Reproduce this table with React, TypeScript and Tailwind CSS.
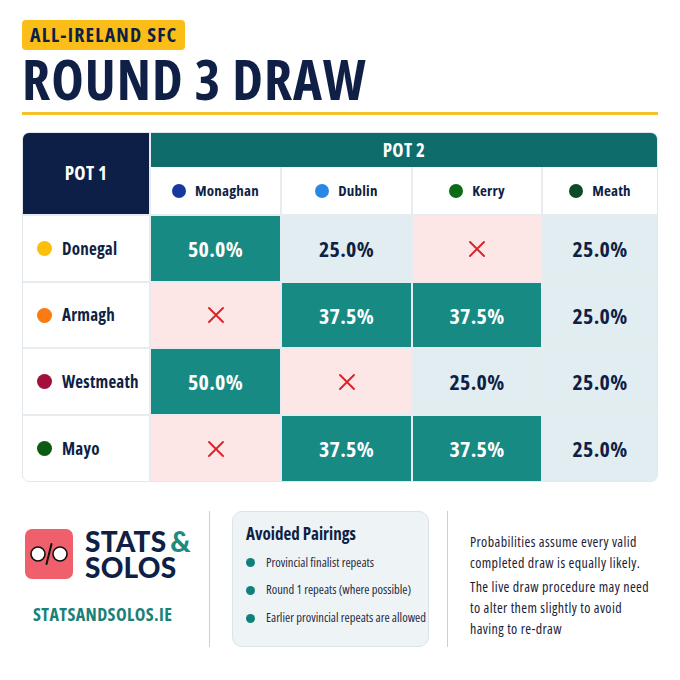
const C = "font-['Open_Sans',sans-serif] [font-stretch:condensed]";

const pot2 = [
  { name: "Monaghan", color: "#17399c" },
  { name: "Dublin", color: "#2b87e3" },
  { name: "Kerry", color: "#0b6b16" },
  { name: "Meath", color: "#0c4a2b" },
];

type Cell = "hi" | "lo" | "x";

const rows: { name: string; color: string; cells: [Cell, string][] }[] = [
  { name: "Donegal", color: "#fcbf0a", cells: [["hi", "50.0%"], ["lo", "25.0%"], ["x", ""], ["lo", "25.0%"]] },
  { name: "Armagh", color: "#fb7a12", cells: [["x", ""], ["hi", "37.5%"], ["hi", "37.5%"], ["lo", "25.0%"]] },
  { name: "Westmeath", color: "#a3103c", cells: [["hi", "50.0%"], ["x", ""], ["lo", "25.0%"], ["lo", "25.0%"]] },
  { name: "Mayo", color: "#0b5c12", cells: [["x", ""], ["hi", "37.5%"], ["hi", "37.5%"], ["lo", "25.0%"]] },
];

function Cross() {
  return (
    <svg width="18" height="18" viewBox="0 0 18 18">
      <path d="M2 2L16 16M16 2L2 16" stroke="#d8232a" strokeWidth="1.9" strokeLinecap="round" />
    </svg>
  );
}

function Logo() {
  return (
    <svg width="48" height="50" viewBox="0 0 48 50">
      <rect x="0" y="0" width="48" height="50" rx="7" fill="#ef5f6c" />
      <circle cx="13" cy="25" r="7" fill="#fff" stroke="#111" strokeWidth="1.6" />
      <circle cx="35" cy="25" r="7" fill="#fff" stroke="#111" strokeWidth="1.6" />
      <path d="M26.5 15L21.5 35" stroke="#111" strokeWidth="2" strokeLinecap="round" />
    </svg>
  );
}

export default function App() {
  return (
    <div className={`w-[680px] h-[680px] bg-white px-[22px] pt-[20px] text-[#0f1f45] ${C}`}>
      {/* Header */}
      <div className="inline-flex h-[30px] items-center rounded-[4px] bg-[#fbbd17] px-[8px] text-[20px] font-bold leading-none tracking-[1.2px]">
        ALL-IRELAND SFC
      </div>
      <h1 className="mt-[4px] text-[55px] font-bold leading-[50px] tracking-[1px]">ROUND 3 DRAW</h1>
      <div className="mt-[8px] h-[3px] w-full bg-[#f6c22b]" />

      {/* Table */}
      <div className="mt-[17px] overflow-hidden rounded-[7px] border border-[#e3e8ee] bg-[#e6ecf0]">
        <div className="grid grid-cols-[126px_129px_129px_128px_1fr] grid-rows-[32px_47px_65px_64px_65px_65px] gap-[2px]">
          <div className="row-span-2 flex items-center justify-center bg-[#0d1f46] text-[19px] font-bold tracking-[0.3px] text-white">
            POT 1
          </div>
          <div className="col-span-4 -mb-[2px] flex items-center justify-center bg-[#0e6d6b] text-[19px] font-bold tracking-[0.3px] text-white">
            POT 2
          </div>
          {pot2.map((t) => (
            <div key={t.name} className="flex items-center justify-center gap-[9px] bg-white text-[15px] font-bold tracking-[0.2px]">
              <span className="h-[14px] w-[14px] shrink-0 rounded-full" style={{ background: t.color }} />
              {t.name}
            </div>
          ))}
          {rows.map((r) => (
            <>
              <div key={r.name} className="flex items-center gap-[10px] bg-white pl-[14px] text-[17px] font-bold tracking-[0.2px]">
                <span className="h-[15px] w-[15px] shrink-0 rounded-full" style={{ background: r.color }} />
                {r.name}
              </div>
              {r.cells.map(([kind, v], i) =>
                kind === "hi" ? (
                  <div key={i} className="flex items-center justify-center bg-[#178a84] text-[22px] font-bold tracking-[0.3px] text-white">
                    {v}
                  </div>
                ) : kind === "lo" ? (
                  <div key={i} className="flex items-center justify-center bg-[#e1edf1] text-[22px] font-bold tracking-[0.3px] text-[#0f1f45]">
                    {v}
                  </div>
                ) : (
                  <div key={i} className="flex items-center justify-center bg-[#fce6e6]">
                    <Cross />
                  </div>
                )
              )}
            </>
          ))}
        </div>
      </div>

      {/* Footer */}
      <div className="mt-[29px] flex h-[136px]">
        <div className="flex w-[187px] flex-col pt-[17px]">
          <div className="flex items-center gap-[12px] pl-[3px]">
            <Logo />
            <div className="font-['Lato',sans-serif] text-[28px] font-black leading-[26px] tracking-[0.2px] [font-stretch:normal]">
              <div>
                STATS<span className="ml-[4px] text-[#1a8c80]">&amp;</span>
              </div>
              <div>SOLOS</div>
            </div>
          </div>
          <div className="mt-[21px] pl-[11px] text-[18px] font-bold tracking-[0.4px] text-[#1a8178]">STATSANDSOLOS.IE</div>
        </div>
        <div className="w-px bg-[#c9cfd8]" />
        <div className="ml-[22px] w-[197px] rounded-[10px] border border-[#d9e4e9] bg-[#eef4f6] pl-[13px] pr-[4px] pt-[9px]">
          <div className="text-[17px] font-bold">Avoided Pairings</div>
          <ul className="mt-[7px] flex flex-col gap-[9px] text-[12.5px] text-[#1f2a44]">
            {["Provincial finalist repeats", "Round 1 repeats (where possible)", "Earlier provincial repeats are allowed"].map((s) => (
              <li key={s} className="flex items-center gap-[11px] whitespace-nowrap">
                <span className="h-[9px] w-[9px] shrink-0 rounded-full bg-[#12807a]" />
                {s}
              </li>
            ))}
          </ul>
        </div>
        <div className="ml-[18px] w-px bg-[#c9cfd8]" />
        <div className="ml-[22px] w-[186px] pt-[20px] text-[14px] leading-[21px] tracking-[0.4px] text-[#1a2238]">
          <p>Probabilities assume every valid completed draw is equally likely.</p>
          <p className="mt-[3px]">The live draw procedure may need to alter them slightly to avoid having to re-draw</p>
        </div>
      </div>
    </div>
  );
}
